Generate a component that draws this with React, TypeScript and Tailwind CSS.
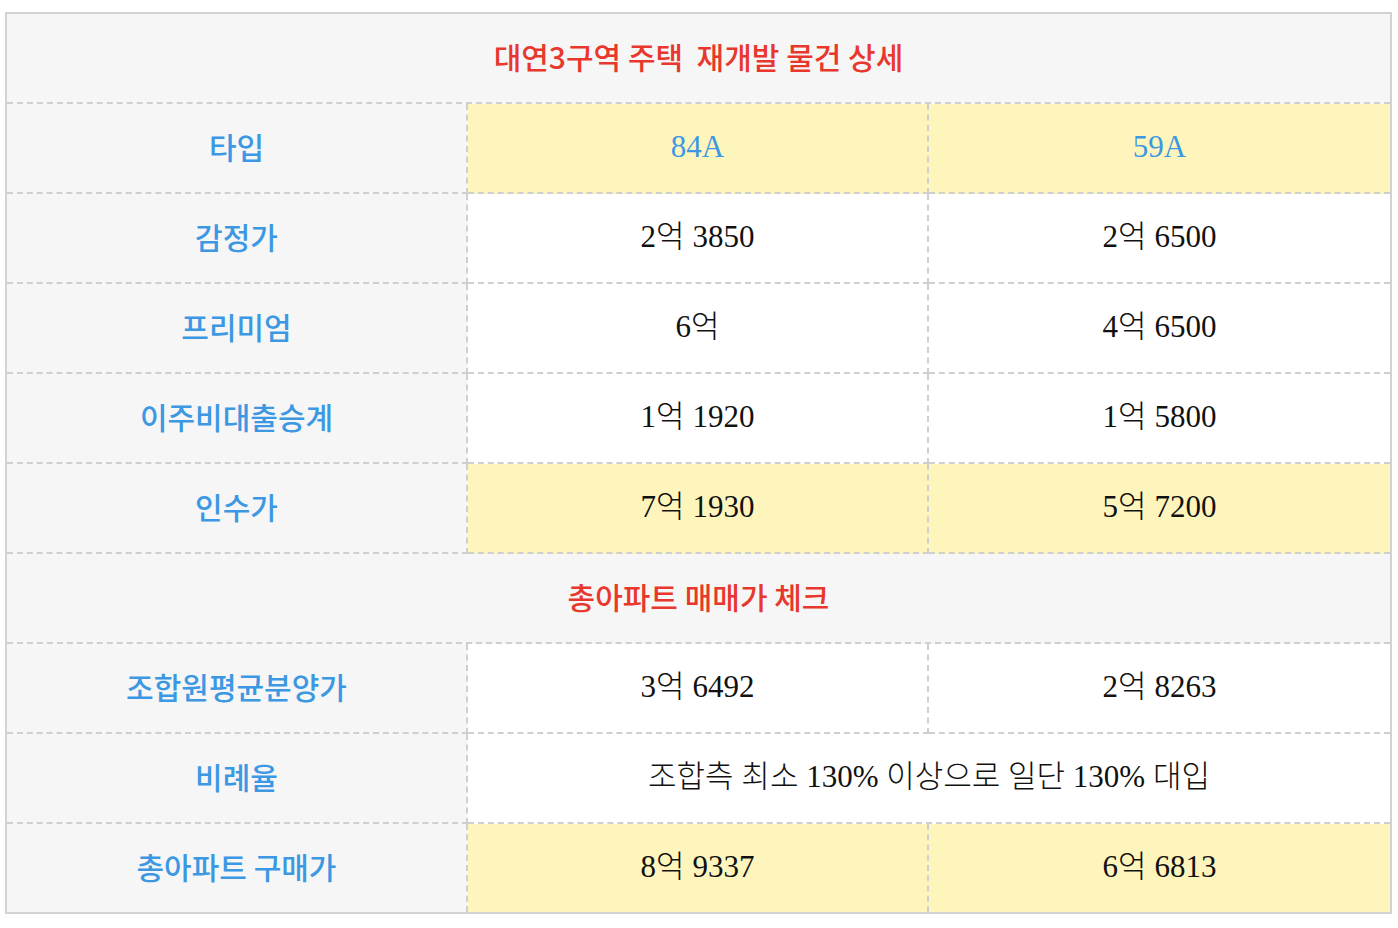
import React from 'react';

const sans = "font-['Noto_Sans_CJK_KR','Noto_Sans',sans-serif]";
const serif = "font-['Liberation_Serif','Noto_Sans_CJK_KR',serif]";

type Row = {
  label: string;
  a: string;
  b?: string;
  yellow?: boolean;
  blueValues?: boolean;
};

const topRows: Row[] = [
  { label: '타입', a: '84A', b: '59A', yellow: true, blueValues: true },
  { label: '감정가', a: '2억 3850', b: '2억 6500' },
  { label: '프리미엄', a: '6억', b: '4억 6500' },
  { label: '이주비대출승계', a: '1억 1920', b: '1억 5800' },
  { label: '인수가', a: '7억 1930', b: '5억 7200', yellow: true },
];

const bottomRows: Row[] = [
  { label: '조합원평균분양가', a: '3억 6492', b: '2억 8263' },
  { label: '비례율', a: '조합측 최소 130% 이상으로 일단 130% 대입' },
  { label: '총아파트 구매가', a: '8억 9337', b: '6억 6813', yellow: true },
];

function TitleRow({ text, last }: { text: string; last?: boolean }) {
  return (
    <div
      className={`col-span-3 h-[90px] flex items-center justify-center bg-[#f6f6f6] ${
        last ? '' : 'border-b-2 border-dashed border-[#cfcfcf]'
      }`}
    >
      <span className={`${sans} text-[30px] font-medium text-[#e8382d] whitespace-pre mt-[-4px]`}>{text}</span>
    </div>
  );
}

function DataRow({ row, last }: { row: Row; last?: boolean }) {
  const bottom = last ? 'h-[88px]' : 'h-[90px] border-b-2 border-dashed border-[#cfcfcf]';
  const valueBg = row.yellow ? 'bg-[#fef5bc]' : 'bg-white';
  const valueColor = row.blueValues ? 'text-[#3d98e3]' : 'text-[#111]';
  const valueText = `${serif} text-[31px] font-light mt-[-1px] ${valueColor}`;
  return (
    <>
      <div className={`${bottom} flex items-center justify-center bg-[#f6f6f6] border-r-2 border-r-[#cfcfcf] border-dashed`}>
        <span className={`${sans} text-[30px] font-medium text-[#3d98e3] mt-[-3px]`}>{row.label}</span>
      </div>
      {row.b ? (
        <>
          <div className={`${bottom} ${valueBg} flex items-center justify-center border-r-2 border-r-[#cfcfcf] border-dashed`}>
            <span className={valueText}>{row.a}</span>
          </div>
          <div className={`${bottom} ${valueBg} flex items-center justify-center`}>
            <span className={valueText}>{row.b}</span>
          </div>
        </>
      ) : (
        <div className={`${bottom} ${valueBg} col-span-2 flex items-center justify-center`}>
          <span className={valueText}>{row.a}</span>
        </div>
      )}
    </>
  );
}

export default function App() {
  return (
    <div className="min-h-[928px] w-[1398px] bg-white pt-[12px] pl-[5px]">
      <div className="w-[1387px] border-2 border-[#d2d2d2] grid grid-cols-3">
        <TitleRow text="대연3구역 주택  재개발 물건 상세" />
        {topRows.map((r) => (
          <DataRow key={r.label} row={r} />
        ))}
        <TitleRow text="총아파트 매매가 체크" />
        {bottomRows.map((r, i) => (
          <DataRow key={r.label} row={r} last={i === bottomRows.length - 1} />
        ))}
      </div>
    </div>
  );
}
